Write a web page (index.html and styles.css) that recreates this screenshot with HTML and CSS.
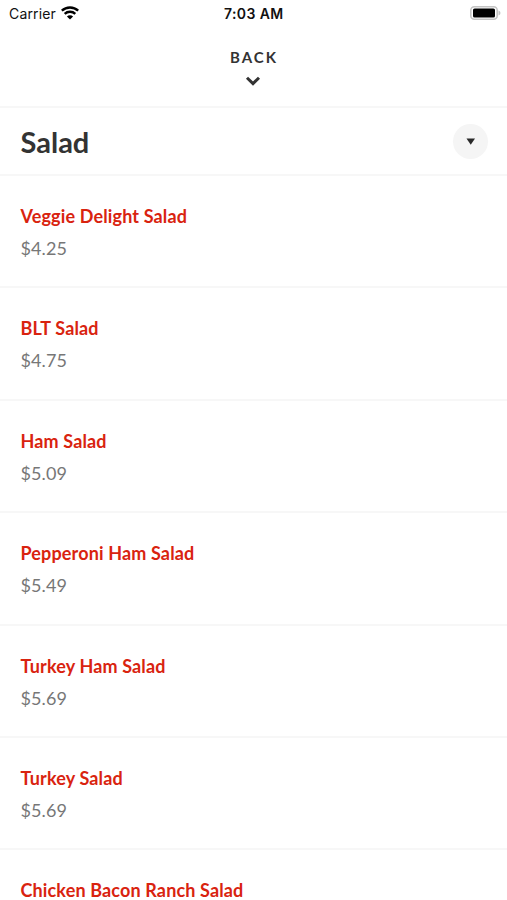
FILE: index.html
```html
<!DOCTYPE html>
<html lang="en">
<head>
<meta charset="utf-8">
<title>Salad</title>
<link rel="stylesheet" href="styles.css">
</head>
<body>
<div class="status">
  <div class="carrier">Carrier
    <svg class="wifi" viewBox="0 0 18 14" width="18" height="14"><path d="M.8 4.700a12 12 0 0 1 16.400 0M3.700 7.900a7.600 7.600 0 0 1 10.600 0" fill="none" stroke="#000" stroke-width="2.400"/><path d="M9 13.600 5.900 10.500a4.400 4.400 0 0 1 6.200 0z"/></svg>
  </div>
  <div class="time">7:03 AM</div>
  <svg class="battery" viewBox="0 0 31 14" width="31" height="14"><rect x=".8" y=".8" width="26.400" height="12.400" rx="3.500" fill="none" stroke="#c4c4c4" stroke-width="1.600"/><rect x="3" y="2.500" width="22" height="9" rx="1.600"/><path d="M28.500 4.500v5q2-.8 2-2.500t-2-2.500" fill="#c4c4c4"/></svg>
</div>
<header class="back"><span>BACK</span>
  <svg viewBox="0 0 16 10" width="16" height="10"><path d="m2 1.700 6 5.900 6-5.900" fill="none" stroke="#333" stroke-width="3"/></svg>
</header>
<section class="category"><h1>Salad</h1>
  <div class="toggle"><svg viewBox="0 0 10 7" width="10" height="7"><path d="M.5.500h8.500L4.750 6.700z" fill="#2a2a2a"/></svg></div>
</section>
<main>
  <article class="item"><h2>Veggie Delight Salad</h2><p>$4.25</p></article>
  <article class="item"><h2>BLT Salad</h2><p>$4.75</p></article>
  <article class="item"><h2>Ham Salad</h2><p>$5.09</p></article>
  <article class="item"><h2>Pepperoni Ham Salad</h2><p>$5.49</p></article>
  <article class="item"><h2>Turkey Ham Salad</h2><p>$5.69</p></article>
  <article class="item"><h2>Turkey Salad</h2><p>$5.69</p></article>
  <article class="item last"><h2>Chicken Bacon Ranch Salad</h2></article>
</main>
</body>
</html>
```
FILE: styles.css
```css
* { box-sizing: border-box; margin: 0; }
body { height: 900px; overflow: hidden; background: #fff; font-family: Lato, sans-serif; color: #333; }
svg { display: block; }
.status { height: 28px; display: grid; grid-template-columns: 1fr auto 1fr; align-items: center; padding: 0 6px 1px 9px; font: 14px/26px Inter, sans-serif; color: #111; }
.carrier { display: flex; align-items: center; gap: 5.5px; letter-spacing: .15px; }
.carrier svg, .battery { margin-top: -1px; }
.time { font-weight: 600; letter-spacing: .4px; margin-right: 2.5px; }
.battery { justify-self: end; }
.back { height: 80px; border-bottom: 2px solid #f7f7f7; display: flex; flex-direction: column; align-items: center; padding: 19px 1px 0 0; gap: 9px; }
.back span { font-size: 15px; line-height: 20px; font-weight: 700; letter-spacing: 2px; margin-right: -2px; }
.category { height: 68px; border-bottom: 2px solid #f7f7f7; display: flex; align-items: center; justify-content: space-between; padding: 1px 19px 0 20.5px; }
h1 { font-size: 29px; line-height: 36px; font-weight: 700; }
.toggle { width: 35px; height: 35px; border-radius: 50%; background: #f5f5f5; display: grid; place-items: center; }
.item { height: 112.4px; border-bottom: 2px solid #f7f7f7; padding: 28px 20.5px 0; }
h2 { font-size: 18px; line-height: 24px; font-weight: 700; letter-spacing: .14px; color: #d9230f; }
.item p { font-size: 18px; line-height: 24px; margin-top: 8px; color: #777; letter-spacing: .1px; }
.last { height: 49px; border: 0; }
.last h2 { line-height: 20px; padding-top: 1.5px; }
```
